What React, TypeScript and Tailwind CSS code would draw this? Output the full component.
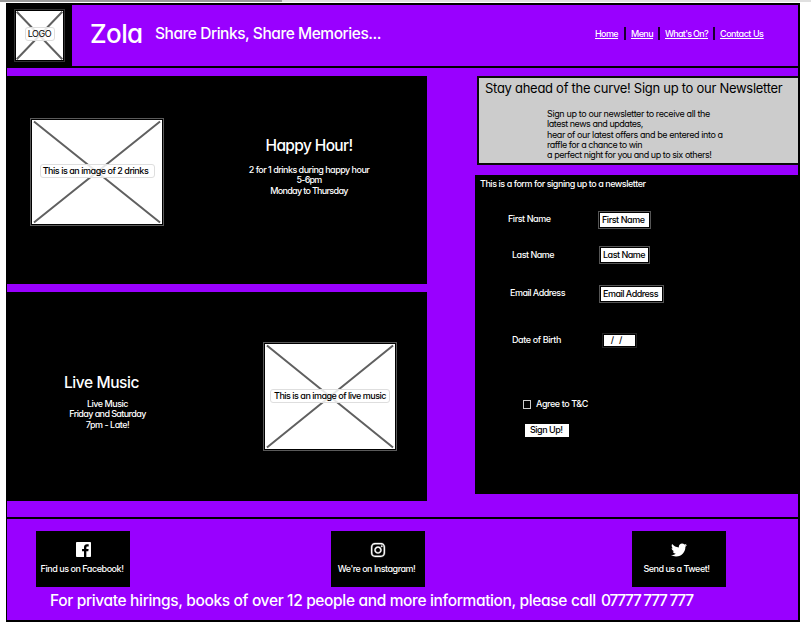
import type { ReactNode } from 'react';
import { FaInstagram, FaTwitter } from 'react-icons/fa';

function Placeholder({ className, label, labelClass }: { className: string; label: string; labelClass: string }) {
  return (
    <div className={`relative flex shrink-0 items-center justify-center border p-px ${className}`}>
      <div className="h-full w-full bg-white">
        <svg className="block h-full w-full" viewBox="0 0 100 100" preserveAspectRatio="none">
          <path
            d="M1.5 1.5 L98.5 98.5 M98.5 1.5 L1.5 98.5"
            stroke="#606060"
            strokeWidth="2"
            vectorEffect="non-scaling-stroke"
          />
        </svg>
      </div>
      <span
        className={`absolute flex h-[14px] items-center justify-center rounded-[3px] border border-[#dedede] bg-white/85 text-black ${labelClass}`}
      >
        {label}
      </span>
    </div>
  );
}

function Field({ label, row, labelClass, inputClass, value }: { label: string; row: string; labelClass: string; inputClass: string; value: string }) {
  return (
    <div className={`flex ${row}`}>
      <div className="w-[123px] shrink-0">
        <span className={`block leading-[16px] ${labelClass}`}>{label}</span>
      </div>
      <div className={`h-full border p-px ${inputClass}`}>
        <div className="flex h-full items-center whitespace-pre bg-white pb-px pl-[2px] text-black">{value}</div>
      </div>
    </div>
  );
}

function SocialTile({ className, textClass, text, children }: { className: string; textClass: string; text: string; children: ReactNode }) {
  return (
    <div className={`flex h-[56px] w-[94px] flex-col items-center bg-black pt-[11px] ${className}`}>
      <div className="flex h-[15px] items-center">{children}</div>
      <span className={`mt-[7px] leading-[10px] ${textClass}`}>{text}</span>
    </div>
  );
}

export default function App() {
  return (
    <div className="flex h-[630px] w-[811px] flex-col overflow-hidden whitespace-nowrap bg-white font-['Inter','Liberation_Sans',sans-serif] text-[9px] font-medium leading-[10px] text-white [font-feature-settings:'cv11']">
      <div className="flex h-[2px] shrink-0 bg-[#e0e0e0]">
        <div className="w-[282px] bg-[#999]" />
      </div>
      <div className="ml-[6px] mt-px flex h-[619px] w-[794px] flex-col border-2 border-l border-black bg-[#9900ff]">
        <header className="flex h-[63px] shrink-0 border-b-2 border-black">
          <div className="w-[65px] shrink-0 bg-black pl-[7px] pt-[4px]">
            <Placeholder className="h-[53px] w-[51px] border-[#333]" label="LOGO" labelClass="top-[17px] w-[30px] font-normal tracking-[-0.4px]" />
          </div>
          <div className="flex flex-1 items-center pb-[4px]">
            <h1 className="ml-[18px] w-[65px] text-[26px] leading-[30px] tracking-[-0.6px]">Zola</h1>
            <p className="text-[15.5px] tracking-[-0.45px]">Share Drinks, Share Memories...</p>
            <nav className="ml-auto mr-[34px] flex items-center underline underline-offset-1">
              <a className="w-[29px] tracking-[-0.6px]">Home</a>
              <i className="h-[13px] w-[2px] bg-[#1a0030]" />
              <a className="ml-[5px] w-[27px] tracking-[-0.58px]">Menu</a>
              <i className="h-[13px] w-[2px] bg-[#1a0030]" />
              <a className="ml-[5px] w-[48px] tracking-[-0.72px]">What's On?</a>
              <i className="h-[13px] w-[2px] bg-[#1a0030]" />
              <a className="ml-[5px] w-[44px] tracking-[-0.47px]">Contact Us</a>
            </nav>
          </div>
        </header>

        <main className="flex h-[449px] shrink-0 pt-[8px]">
          <div className="flex w-[420px] flex-col gap-[8px]">
            <section className="flex h-[208px] bg-black pl-[23px] pt-[42px]">
              <Placeholder className="h-[108px] w-[134px] border-[#5a5a5a]" label="This is an image of 2 drinks" labelClass="left-[9px] top-[45px] w-[115px] pr-[4px] tracking-[-0.47px]" />
              <div className="ml-[45px] flex w-[200px] flex-col items-center pt-[18px]">
                <h2 className="text-[15.5px] leading-[20px] tracking-[-0.63px]">Happy Hour!</h2>
                <div className="mt-[9px] flex flex-col items-center leading-[10.4px]">
                  <p className="tracking-[-0.52px]">2 for 1 drinks during happy hour</p>
                  <p className="tracking-[-0.79px]">5-6pm</p>
                  <p className="tracking-[-0.69px]">Monday to Thursday</p>
                </div>
              </div>
            </section>
            <section className="flex h-[209px] bg-black pt-[50px]">
              <div className="flex w-[201px] flex-col items-center pt-[31px]">
                <h2 className="mr-[12px] text-[15.5px] leading-[20px] tracking-[-0.42px]">Live Music</h2>
                <div className="mt-[6px] flex flex-col items-center leading-[10.4px]">
                  <p className="tracking-[-0.5px]">Live Music</p>
                  <p className="tracking-[-0.61px]">Friday and Saturday</p>
                  <p className="tracking-[-0.49px]">7pm - Late!</p>
                </div>
              </div>
              <Placeholder className="ml-[55px] h-[109px] w-[134px] border-[#5a5a5a]" label="This is an image of live music" labelClass="left-[6px] top-[46px] w-[120px] tracking-[-0.5px]" />
            </section>
          </div>

          <div className="ml-auto flex w-[323px] flex-col items-end">
            <section className="h-[89px] w-[321px] border-2 border-r-0 border-[#0a0a0a] bg-[#ccc] pl-[6px] pt-[2px] text-black">
              <h2 className="text-[13px] font-normal leading-[16px] tracking-[-0.28px]">Stay ahead of the curve! Sign up to our Newsletter</h2>
              <div className="ml-[62px] mt-[13px] font-normal leading-[10.3px]">
                <p className="tracking-[-0.37px]">Sign up to our newsletter to receive all the</p>
                <p className="tracking-[-0.47px]">latest news and updates,</p>
                <p className="tracking-[-0.4px]">hear of our latest offers and be entered into a</p>
                <p className="tracking-[-0.47px]">raffle for a chance to win</p>
                <p className="tracking-[-0.45px]">a perfect night for you and up to six others!</p>
              </div>
            </section>
            <section className="mt-[10px] h-[319px] w-[323px] bg-black pl-[5px] pt-[4px]">
              <p className="tracking-[-0.46px]">This is a form for signing up to a newsletter</p>
              <div className="-ml-px pt-[22px]">
                <Field row="h-[18px]" label="First Name" labelClass="pl-[29px] tracking-[-0.45px]" inputClass="-ml-[4px] w-[53px] border-[#555] tracking-[-0.45px]" value="First Name" />
                <Field row="mt-[17px] h-[18px]" label="Last Name" labelClass="pl-[33px] pt-px tracking-[-0.51px]" inputClass="-ml-[3px] w-[51px] border-[#555] tracking-[-0.51px]" value="Last Name" />
                <Field row="mt-[21px] h-[18px]" label="Email Address" labelClass="pl-[31px] tracking-[-0.51px]" inputClass="-ml-[3px] w-[65px] border-[#555] tracking-[-0.51px]" value="Email Address" />
                <Field row="mt-[30px] h-[15px]" label="Date of Birth" labelClass="pl-[33px] -mt-px tracking-[-0.41px]" inputClass="w-[35px] border-[#222]" value="  /  / " />
              </div>
              <label className="ml-[43px] mt-[51px] flex items-center">
                <span className="h-[9px] w-[8px] border border-[#ccc]" />
                <span className="ml-[5px] tracking-[-0.42px]">Agree to T&amp;C</span>
              </label>
              <button className="ml-[45px] mt-[15px] flex h-[13px] w-[44px] items-center bg-white pb-px pl-[5px] tracking-[-0.49px] text-black">Sign Up!</button>
            </section>
          </div>
        </main>

        <footer className="flex flex-1 flex-col border-t-2 border-black pt-[12px]">
          <div className="flex pl-[29px]">
            <SocialTile className="" textClass="tracking-[-0.46px] -ml-[2px]" text="Find us on Facebook!">
              <svg className="h-[15px] w-[15px]" viewBox="0 0 24 24" fill="currentColor">
                <path d="M22.676 0H1.324C.593 0 0 .593 0 1.324v21.352C0 23.408.593 24 1.324 24h11.494v-9.294H9.689v-3.621h3.129V8.41c0-3.099 1.894-4.785 4.659-4.785 1.325 0 2.464.097 2.796.141v3.24h-1.921c-1.5 0-1.792.721-1.792 1.771v2.311h3.584l-.465 3.63H16.56V24h6.115c.733 0 1.325-.592 1.325-1.324V1.324C24 .593 23.408 0 22.676 0" />
              </svg>
            </SocialTile>
            <SocialTile className="ml-[201px]" textClass="tracking-[-0.51px] -ml-[3px]" text="We're on Instagram!">
              <FaInstagram className="h-[16px] w-[16px] stroke-white stroke-[12]" />
            </SocialTile>
            <SocialTile className="ml-[207px]" textClass="tracking-[-0.51px] -ml-[5px]" text="Send us a Tweet!">
              <FaTwitter className="h-[16px] w-[16px]" />
            </SocialTile>
          </div>
          <p className="ml-[43px] mt-[4px] flex text-[15.5px] leading-[20px]">
            <span className="w-[551px] tracking-[-0.35px]">For private hirings, books of over 12 people and more information, please call</span>
            <span className="tracking-[-1.3px]">07777 777 777</span>
          </p>
        </footer>
      </div>
    </div>
  );
}
